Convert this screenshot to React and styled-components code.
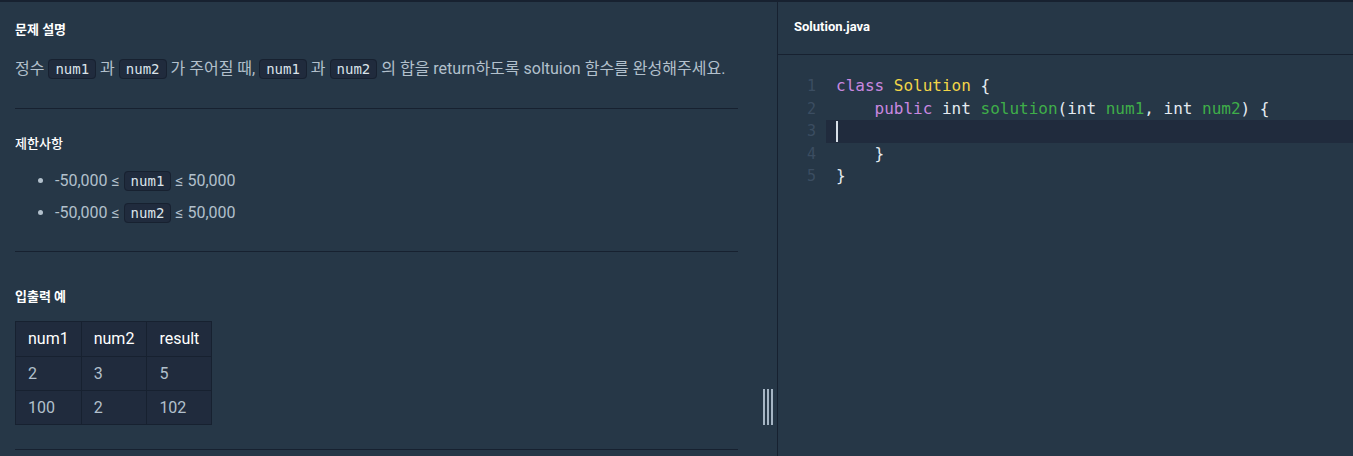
import { createGlobalStyle } from 'styled-components'
import styled from 'styled-components'

const GlobalStyle = createGlobalStyle`
	html, body {
		margin: 0;
		padding: 0;
		background: #263747;
		font-family: Roboto, "Noto Sans CJK KR", sans-serif;
	}
`

let Page = styled.div`
	display: flex;
	height: 456px;
	box-sizing: border-box;
	border-top: 2px solid #172130;
	background: #263747;
	overflow: hidden;
`

let LeftPane = styled.div`
	display: flex;
	width: 777px;
	flex-shrink: 0;
	border-right: 1px solid #172130;
`

let Content = styled.div`
	flex: 1;
	min-width: 0;
	padding: 0 15px;
`

let Gutter = styled.div`
	width: 24px;
	flex-shrink: 0;
	box-sizing: border-box;
	display: flex;
	justify-content: center;
	padding: 387px 0 0 6px;
`

let Handle = styled.div`
	display: flex;
	gap: 2px;
	height: 36px;
	span {
		width: 2px;
		background: #a6b5c4;
	}
`

let Section = styled.section`
	padding: ${props => props.pad || '0'};
	border-bottom: 1px solid #172130;
`

let Title = styled.h5`
	margin: 0;
	font-size: 13px;
	line-height: 20px;
	font-weight: ${props => props.light ? 500 : 700};
	color: #ffffff;
`

let Para = styled.p`
	margin: 17px 0 0;
	font-size: 16px;
	line-height: 24px;
	color: #b2c0cc;
	white-space: nowrap;
`

let Code = styled.code`
	font-family: "DejaVu Sans Mono", monospace;
	font-size: 14px;
	color: #dbe3ea;
	background: #202b3d;
	border: 1px solid #172130;
	border-radius: 4px;
	padding: 1px 6px;
`

let List = styled.ul`
	margin: 15px 0 0;
	padding-left: 40px;
	li {
		font-size: 16px;
		line-height: 24px;
		height: 24px;
		color: #b2c0cc;
		margin-bottom: 8px;
	}
	li::marker {
		color: #b2c0cc;
	}
`

let Table = styled.table`
	border-collapse: collapse;
	background: #202b3d;
	margin-top: 14px;
	th, td {
		border: 1px solid #172130;
		text-align: left;
		padding: 0 12px;
		height: 33px;
		font-size: 16px;
		font-weight: 400;
		line-height: 24px;
	}
	th {
		color: #ffffff;
		height: 34px;
	}
	td {
		color: #b2c0cc;
	}
`

let RightPane = styled.div`
	flex: 1;
	display: flex;
	flex-direction: column;
`

let TabBar = styled.div`
	height: 53px;
	box-sizing: border-box;
	border-bottom: 1px solid #172130;
	display: flex;
	align-items: center;
	padding: 0 0 2px 16px;
`

let Editor = styled.div`
	padding-top: 20px;
	font-family: "DejaVu Sans Mono", monospace;
	font-size: 16px;
`

let Line = styled.div`
	display: flex;
	height: 22.5px;
	line-height: 22.5px;
	white-space: pre;
`

let LineNo = styled.span`
	width: 48px;
	flex-shrink: 0;
	text-align: right;
	padding-right: 10px;
	box-sizing: border-box;
	color: #3b4d61;
	font-size: 15px;
`

let LineText = styled.span`
	flex: 1;
	padding-left: 10px;
	color: #e4ebf1;
	background: ${props => props.active ? '#202b3d' : 'transparent'};
	position: relative;
`

let Cursor = styled.span`
	position: absolute;
	left: 10px;
	top: 1px;
	bottom: 1px;
	width: 2px;
	background: #d8e0e8;
`

let Kw = styled.span`color: #c988e0;`
let Cls = styled.span`color: #f2d548;`
let Fn = styled.span`color: #3fae49;`

function App() {
	let lines = [
		<><Kw>class</Kw> <Cls>Solution</Cls> {'{'}</>,
		<>    <Kw>public</Kw> int <Fn>solution</Fn>(int <Fn>num1</Fn>, int <Fn>num2</Fn>) {'{'}</>,
		null,
		<>    {'}'}</>,
		<>{'}'}</>,
	]

	return (
		<>
			<GlobalStyle />
			<Page>
				<LeftPane>
					<Content>
						<Section pad="18px 0 27px">
							<Title>문제 설명</Title>
							<Para>
								정수 <Code>num1</Code> 과 <Code>num2</Code> 가 주어질 때, <Code>num1</Code> 과 <Code>num2</Code> 의 합을 return하도록 soltuion 함수를 완성해주세요.
							</Para>
						</Section>
						<Section pad="25px 0 18px">
							<Title light>제한사항</Title>
							<List>
								<li>-50,000 ≤ <Code>num1</Code> ≤ 50,000</li>
								<li>-50,000 ≤ <Code>num2</Code> ≤ 50,000</li>
							</List>
						</Section>
						<Section pad="35px 0 24px">
							<Title>입출력 예</Title>
							<Table>
								<thead>
									<tr><th>num1</th><th>num2</th><th>result</th></tr>
								</thead>
								<tbody>
									<tr><td>2</td><td>3</td><td>5</td></tr>
									<tr><td>100</td><td>2</td><td>102</td></tr>
								</tbody>
							</Table>
						</Section>
					</Content>
					<Gutter>
						<Handle><span /><span /><span /></Handle>
					</Gutter>
				</LeftPane>
				<RightPane>
					<TabBar>
						<Title>Solution.java</Title>
					</TabBar>
					<Editor>
						{lines.map((l, i) => (
							<Line key={i}>
								<LineNo>{i + 1}</LineNo>
								<LineText active={l === null}>
									{l === null ? <Cursor /> : l}
								</LineText>
							</Line>
						))}
					</Editor>
				</RightPane>
			</Page>
		</>
	)
}

export default App
